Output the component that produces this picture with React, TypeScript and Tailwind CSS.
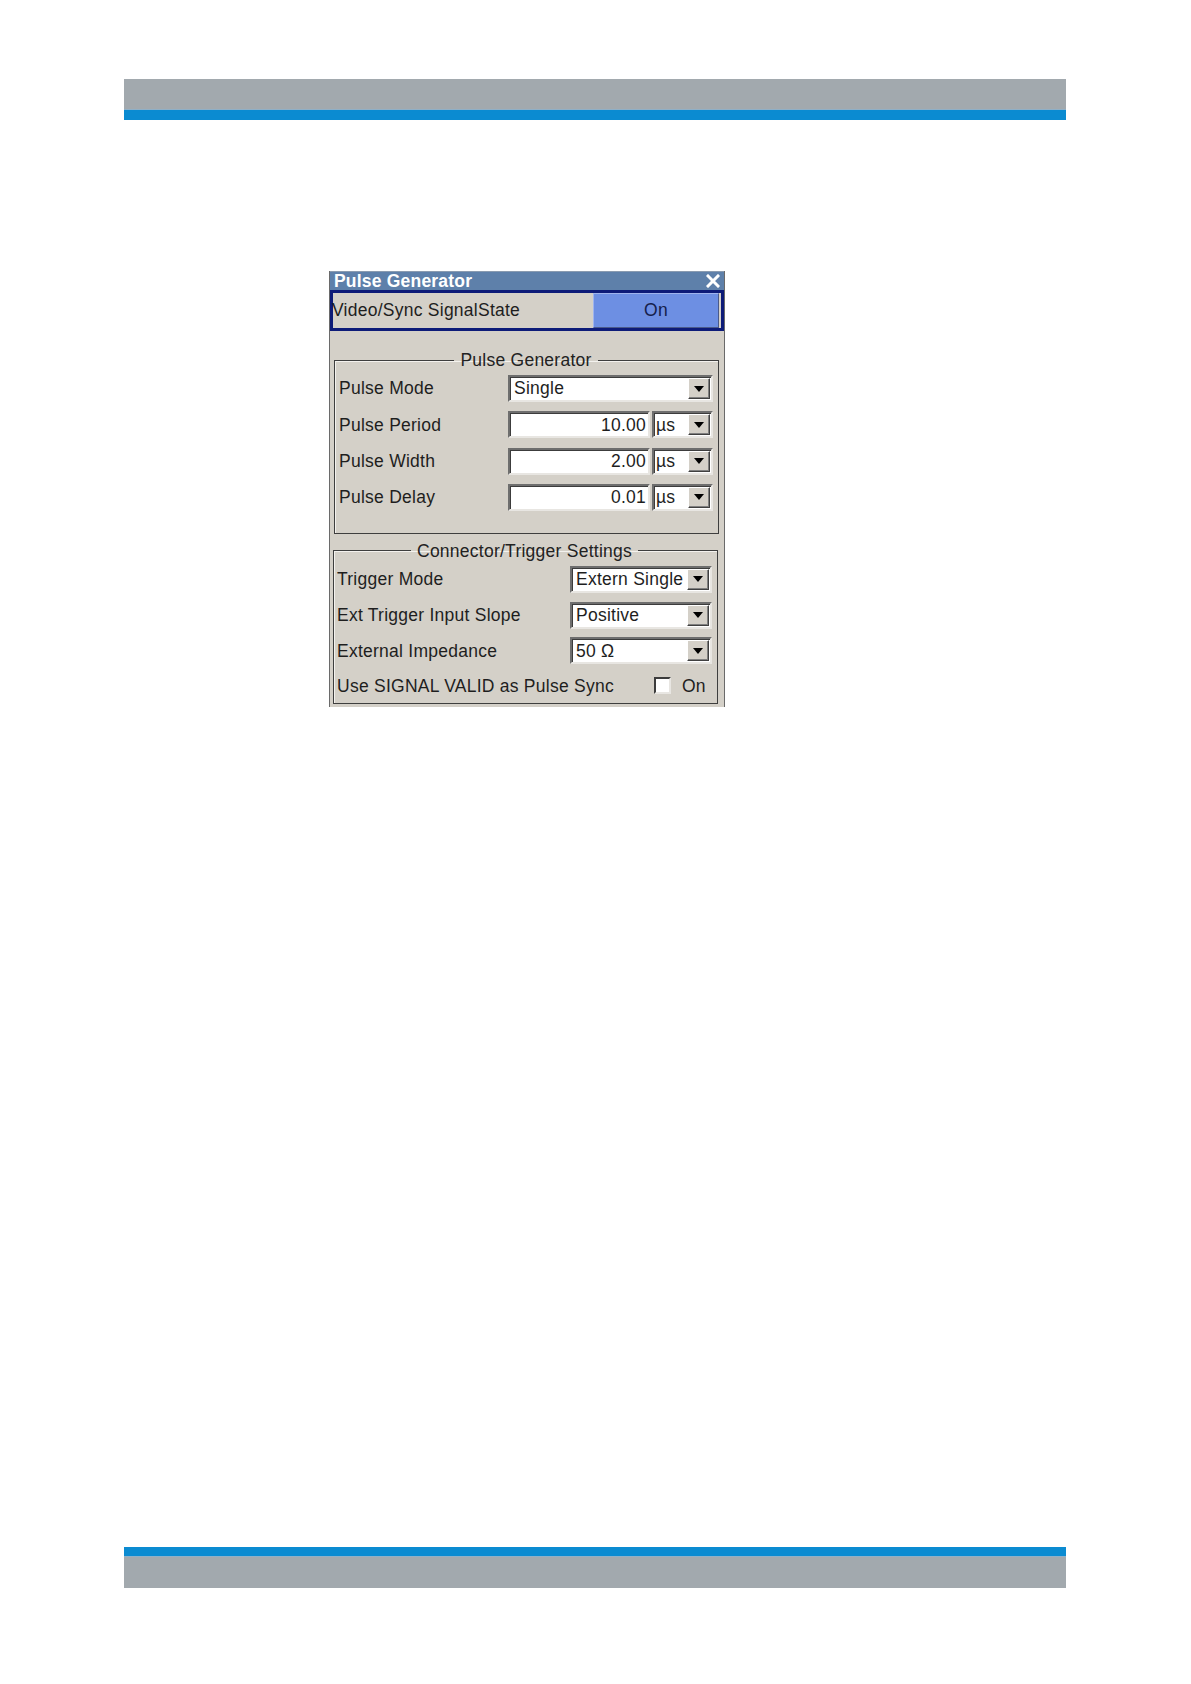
import React from 'react';

const font = "font-['Liberation_Sans',Arial,Helvetica,sans-serif]";

function DropButton() {
  return (
    <div className="flex h-full w-[22px] shrink-0 items-center justify-center bg-[#d4d0c8] border border-t-white border-l-white border-b-[#404040] border-r-[#404040] shadow-[inset_-1px_-1px_0_#808080]">
      <svg width="10" height="6" viewBox="0 0 10 6">
        <path d="M0 0h10L5 6z" fill="#000" />
      </svg>
    </div>
  );
}

function Sunken({ className = '', children }: { className?: string; children: React.ReactNode }) {
  return (
    <div
      className={`flex h-[27px] items-center bg-white border-2 border-t-[#6e6e6e] border-l-[#6e6e6e] border-b-[#e8e6e2] border-r-[#e8e6e2] shadow-[inset_1px_1px_0_#3c3c3c] ${className}`}
    >
      {children}
    </div>
  );
}

function Select({ value, className = '' }: { value: string; className?: string }) {
  return (
    <Sunken className={`pr-[1px] py-[1px] ${className}`}>
      <span className="flex-1 pl-[4px] truncate">{value}</span>
      <DropButton />
    </Sunken>
  );
}

function NumberField({ value, unit }: { value: string; unit: string }) {
  return (
    <div className="flex gap-[2px]">
      <Sunken className="w-[142px] justify-end pr-[2px]">
        <span>{value}</span>
      </Sunken>
      <Sunken className="w-[61px] pr-[1px] py-[1px]">
        <span className="flex-1 pl-[2px]">{unit}</span>
        <DropButton />
      </Sunken>
    </div>
  );
}

function Group({ title, className = '', children }: { title: string; className?: string; children: React.ReactNode }) {
  return (
    <fieldset className={`border border-[#3e3e3e] shadow-[inset_1px_1px_0_#f4f2ee] ${className}`}>
      <legend className="mx-auto px-[6px] leading-[20px] text-[#222]">{title}</legend>
      {children}
    </fieldset>
  );
}

const pulseRows = [
  { label: 'Pulse Period', value: '10.00', unit: 'µs' },
  { label: 'Pulse Width', value: '2.00', unit: 'µs' },
  { label: 'Pulse Delay', value: '0.01', unit: 'µs' },
];

const triggerRows = [
  { label: 'Trigger Mode', value: 'Extern Single' },
  { label: 'Ext Trigger Input Slope', value: 'Positive' },
  { label: 'External Impedance', value: '50 Ω' },
];

function PulseDialog() {
  return (
    <div className="ml-[205px] mt-[151px] w-[396px] h-[436px] bg-[#d4d0c8] border-x border-[#6a6a6a] text-[17.5px] tracking-[0.25px] text-[#1e1e1e]">
      {/* title bar */}
      <div className="flex h-[19px] items-center justify-between bg-[#5e80aa] border-t border-[#8a9bb0] pl-[4px] pr-[4px]">
        <span className="font-bold text-white leading-[19px] tracking-[0.2px]">Pulse Generator</span>
        <svg width="14" height="14" viewBox="0 0 14 14">
          <path d="M2 2l10 10M12 2L2 12" stroke="#fff" strokeWidth="3" strokeLinecap="square" />
        </svg>
      </div>

      {/* state row */}
      <div className="flex h-[41px] items-stretch border-[3px] border-[#0d1b78]">
        <div className="flex flex-1 items-center pl-[1px] -ml-[2px]">Video/Sync SignalState</div>
        <div className="mr-[2px] flex w-[126px] items-center justify-center bg-[#6d8fe3] border border-t-[#9fb4ee] border-l-[#9fb4ee] border-b-[#4a5a8a] border-r-[#4a5a8a] text-[#15204a]">
          On
        </div>
      </div>

      <Group title="Pulse Generator" className="mt-[19px] ml-[4px] mr-[5px] pl-[4px] pr-[5px] pt-[5px] pb-[22px]">
        <div className="flex flex-col gap-[9.3px]">
          <div className="flex h-[27px] items-center">
            <span className="w-[169px] shrink-0">Pulse Mode</span>
            <Select value="Single" className="w-[205px]" />
          </div>
          {pulseRows.map(row => (
            <div key={row.label} className="flex h-[27px] items-center">
              <span className="w-[169px] shrink-0">{row.label}</span>
              <NumberField value={row.value} unit={row.unit} />
            </div>
          ))}
        </div>
      </Group>

      <Group title="Connector/Trigger Settings" className="mt-[7px] ml-[3px] mr-[6px] pl-[3px] pr-[5px] pt-[5px] pb-[4px]">
        <div className="flex flex-col gap-[8.7px]">
          {triggerRows.map(row => (
            <div key={row.label} className="flex h-[27px] items-center">
              <span className="w-[233px] shrink-0">{row.label}</span>
              <Select value={row.value} className="w-[142px]" />
            </div>
          ))}
          <div className="flex h-[26px] items-center">
            <span className="w-[317px] shrink-0">Use SIGNAL VALID as Pulse Sync</span>
            <div className="h-[17px] w-[17px] bg-white border-2 border-t-[#3c3c3c] border-l-[#3c3c3c] border-b-[#e8e6e2] border-r-[#e8e6e2]" />
            <span className="ml-[11px]">On</span>
          </div>
        </div>
      </Group>
    </div>
  );
}

export default function App() {
  return (
    <div className={`w-[1191px] min-h-[1684px] bg-white pl-[124px] pt-[79px] ${font}`}>
      {/* header band */}
      <div className="flex w-[942px] flex-col">
        <div className="h-[30px] bg-[#a2a9ae]" />
        <div className="h-[1px] bg-[#8fb0c8]" />
        <div className="h-[10px] bg-[#0b8bd1]" />
      </div>

      <PulseDialog />

      {/* footer band */}
      <div className="mt-[840px] flex w-[942px] flex-col">
        <div className="h-[9px] bg-[#0b8bd1]" />
        <div className="h-[1px] bg-[#8fb0c8]" />
        <div className="h-[31px] bg-[#a2a9ae]" />
      </div>
    </div>
  );
}
